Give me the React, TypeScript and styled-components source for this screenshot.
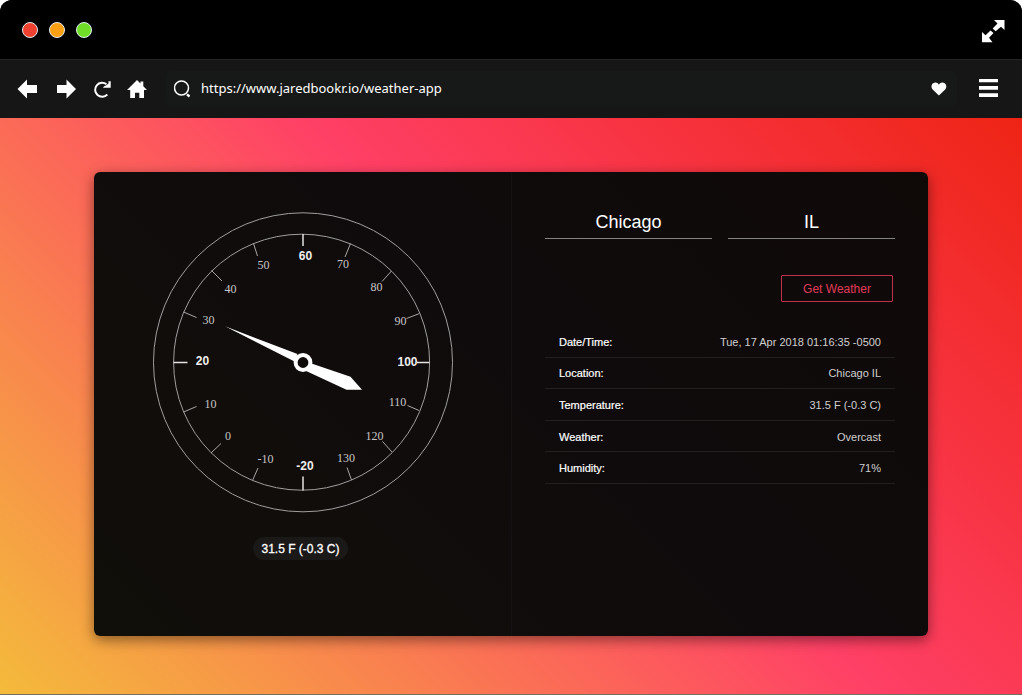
import React from 'react';
import styled, { createGlobalStyle } from 'styled-components';

const GlobalStyle = createGlobalStyle`
  *, *::before, *::after { box-sizing: border-box; }
  body {
    margin: 0;
    background: #fff;
    font-family: "Liberation Sans", Arial, sans-serif;
  }
  button, input { font: inherit; }
`;

const BrowserWindow = styled.div`
  display: flex;
  flex-direction: column;
  min-height: 100vh;
  overflow: hidden;
  border-radius: 12px 12px 0 0;
  background: #000;
`;

const TitleBar = styled.header`
  display: flex;
  align-items: center;
  justify-content: space-between;
  height: 59px;
  padding: 2px 17px 0 22px;
  background: #000;
`;

const Lights = styled.div`
  display: flex;
  gap: 11px;
  padding-bottom: 2px;
`;

const Light = styled.button<{ $color: string }>`
  width: 16px;
  height: 16px;
  padding: 0;
  border: 1px solid #e4efef;
  border-radius: 50%;
  background: ${(p) => p.$color};
`;

const IconButton = styled.button`
  display: flex;
  padding: 0;
  border: 0;
  background: none;
  color: #fff;
  cursor: pointer;
`;

const Toolbar = styled.nav`
  display: flex;
  align-items: center;
  height: 59px;
  padding: 0 23px 0 16px;
  border-top: 1px solid #242424;
  background: #161616;
`;

const NavButtons = styled.div`
  display: flex;
  gap: 12px;
  margin-right: 18px;
`;

const AddressBar = styled.div`
  display: flex;
  flex: 1;
  align-items: center;
  height: 36px;
  margin-right: 22px;
  padding: 0 10px 0 8px;
  border-radius: 6px;
  background: #171918;
`;

const AddressInput = styled.input`
  flex: 1;
  min-width: 0;
  height: 24px;
  margin: 0 8px 0 11px;
  padding: 0 0 2px;
  border: 0;
  outline: 0;
  background: none;
  color: #fff;
  font-family: "Noto Sans", "Open Sans", sans-serif;
  font-size: 13px;
`;

const Page = styled.main`
  display: flex;
  flex: 1;
  padding: 54px 94px 58px;
  border-bottom: 1px solid #75705c;
  background: linear-gradient(45deg, #f4bb3b 0%, #ff4066 55%, #ee2415 100%);
`;

const Card = styled.section`
  display: grid;
  flex: 1;
  grid-template-columns: 1fr 1fr;
  border-radius: 6px;
  background: linear-gradient(45deg, #110f0a, #0f0b0c 55%, #0f0a08);
  box-shadow: 0 4px 14px rgba(0, 0, 0, 0.45);
`;

const GaugePanel = styled.div`
  display: flex;
  flex-direction: column;
  align-items: center;
  padding: 40px 21px 40px 20px;
`;

const Reading = styled.output`
  margin-top: 24px;
  margin-right: 3px;
  padding: 1px 8px 0;
  border-radius: 12px;
  background: #1b1918;
  color: #fff;
  font-size: 12px;
  line-height: 22px;
  -webkit-text-stroke: 0.3px #fff;
`;

const DetailPanel = styled.div`
  padding: 35px 33px 40px;
  border-left: 1px solid #161213;
`;

const SearchForm = styled.form`
  display: grid;
  grid-template-columns: 1fr 1fr;
  column-gap: 16px;
  row-gap: 36px;
`;

const PlaceInput = styled.input`
  width: 100%;
  height: 32px;
  padding: 0;
  border: 0;
  border-bottom: 1px solid #858283;
  border-radius: 0;
  outline: 0;
  background: none;
  color: #fff;
  font-size: 18px;
  text-align: center;
`;

const SubmitButton = styled.button`
  grid-column: 2;
  justify-self: end;
  width: 112px;
  height: 27px;
  margin-right: 2px;
  padding: 0;
  border: 1px solid #c0304c;
  border-radius: 1px;
  background: none;
  color: #e03a58;
  font-size: 12px;
  cursor: pointer;
`;

const Table = styled.table`
  width: 100%;
  height: 158px;
  margin-top: 24px;
  border-collapse: separate;
  border-spacing: 0;
  font-size: 11px;
  line-height: 16px;
`;

const NameCell = styled.th`
  padding: 1px 14px 0;
  border-bottom: 1px solid #221f1f;
  color: #fff;
  font-weight: 400;
  text-align: left;
  -webkit-text-stroke: 0.2px #fff;
`;

const ValueCell = styled.td`
  padding: 1px 14px 0;
  border-bottom: 1px solid #221f1f;
  color: #d0cecf;
  text-align: right;
`;

const MinorLabel = styled.text`
  fill: #c8c6c6;
  font-family: "Liberation Serif", "Times New Roman", serif;
  font-size: 12px;
  text-anchor: middle;
`;

const MajorLabel = styled.text`
  fill: #f0eeee;
  font-family: "Liberation Sans", Arial, sans-serif;
  font-size: 12px;
  font-weight: 700;
  text-anchor: middle;
`;

type Mark = { label: string; x: number; y: number; tick: string; major?: boolean };

const marks: Mark[] = [
  { label: '60', x: 153.5, y: 44, tick: 'M151 22V34', major: true },
  { label: '70', x: 191, y: 52, tick: 'M198.500 31.5L193 45' },
  { label: '80', x: 224.5, y: 75, tick: 'M239.5 59L230 69.5' },
  { label: '90', x: 248.5, y: 109, tick: 'M267.5 101.5L254.5 106.5' },
  { label: '100', x: 255.5, y: 150, tick: 'M277.5 150.5H265', major: true },
  { label: '110', x: 245.5, y: 190, tick: 'M267 198.5L255.5 193.5' },
  { label: '120', x: 222.5, y: 224, tick: 'M240 240L230.5 229.5' },
  { label: '130', x: 194, y: 246, tick: 'M199.5 268L195 255.5' },
  { label: '-20', x: 153, y: 254, tick: 'M151 278.5V264.5', major: true },
  { label: '-10', x: 113.5, y: 247, tick: 'M100.5 268.5L106 256' },
  { label: '0', x: 76, y: 224, tick: 'M59 241L69 231.5' },
  { label: '10', x: 58.5, y: 192, tick: 'M31.5 200L44.5 194.5' },
  { label: '20', x: 50.5, y: 149, tick: 'M21.5 150.5H35.5', major: true },
  { label: '30', x: 56.5, y: 108, tick: 'M31.5 100L44.5 105.5' },
  { label: '40', x: 78.5, y: 77, tick: 'M59.5 58.5L70 69' },
  { label: '50', x: 111.5, y: 53, tick: 'M101.5 31.5L105.5 44' },
];

const weather = [
  ['Date/Time:', 'Tue, 17 Apr 2018 01:16:35 -0500'],
  ['Location:', 'Chicago IL'],
  ['Temperature:', '31.5 F (-0.3 C)'],
  ['Weather:', 'Overcast'],
  ['Humidity:', '71%'],
];

function Gauge() {
  return (
    <svg width="301" height="301" viewBox="0 0 301 301" role="img" aria-label="Thermometer dial">
      <g fill="none" stroke="#a09e9e">
        <circle cx="151" cy="150.3" r="149.5" />
        <circle cx="149.6" cy="150.2" r="128" />
      </g>
      {marks.map((m) => {
        const Label = m.major ? MajorLabel : MinorLabel;
        return (
          <g key={m.label}>
            <path
              d={m.tick}
              stroke={m.major ? '#e4e2e2' : '#a8a6a6'}
              strokeWidth={m.major ? 1.5 : 1}
            />
            <Label x={m.x} y={m.y + 4}>{m.label}</Label>
          </g>
        );
      })}
      <path
        fill="#fff"
        d="M73 114.3L145.5 142L142.500 149.5ZM158 151L198.5 164.7L210 177.7H194.5L153 158.5Z"
      />
      <circle cx="151" cy="150.5" r="7.4" fill="#0f0b0a" stroke="#fff" strokeWidth="4" />
    </svg>
  );
}

function NavIcon({ children }: { children: React.ReactNode }) {
  return (
    <svg width="24" height="24" viewBox="0 0 24 24" fill="currentColor" aria-hidden="true">
      {children}
    </svg>
  );
}

export default function App() {
  return (
    <>
      <GlobalStyle />
      <BrowserWindow>
        <TitleBar>
          <Lights>
            <Light type="button" $color="#f04030" aria-label="Close" />
            <Light type="button" $color="#ffa012" aria-label="Minimize" />
            <Light type="button" $color="#70dd28" aria-label="Maximize" />
          </Lights>
          <IconButton type="button" aria-label="Full screen">
            <svg width="24" height="24" viewBox="0 0 24 24" fill="currentColor" aria-hidden="true">
              <path d="M13 1H23.500V11L20 7.700L14.700 12.300L11.700 9.500L16.500 4.500Z" />
              <path d="M9.500 11.500L12.500 14L8 18.700L11.500 23.300H1V13L4.500 16.300Z" />
            </svg>
          </IconButton>
        </TitleBar>

        <Toolbar aria-label="Browser">
          <NavButtons>
            <IconButton type="button" aria-label="Back">
              <NavIcon><path d="M1.500 12L11 2.500V8H21V16H11V21.500Z" /></NavIcon>
            </IconButton>
            <IconButton type="button" aria-label="Forward">
              <NavIcon><path d="M24 12L14.500 2.500V8H5V16H14.500V21.500Z" /></NavIcon>
            </IconButton>
            <IconButton type="button" aria-label="Reload">
              <NavIcon>
                <path
                  d="M19.300 17.500A7 7 0 1 1 18.500 7.300"
                  fill="none"
                  stroke="currentColor"
                  strokeWidth="2"
                />
                <path d="M22.700 4.300V10.800H14.800L16.500 9L18 8.500L20.500 6.500V4.300Z" />
              </NavIcon>
            </IconButton>
            <IconButton type="button" aria-label="Home">
              <NavIcon>
                <path d="M13 3L16.500 6.500V4.500H19.300V9.200L23 13H20V21H15.300V15.800H11V21H6.200V13H3Z" />
              </NavIcon>
            </IconButton>
          </NavButtons>
          <AddressBar>
            <svg width="16" height="18" viewBox="0 0 16 18" fill="none" stroke="#fff" aria-hidden="true">
              <circle cx="7.500" cy="8" r="7" strokeWidth="1.500" />
              <path d="M13 14.300L15.500 16.500" strokeWidth="2.400" />
            </svg>
            <AddressInput
              type="text"
              aria-label="Address"
              defaultValue="https://www.jaredbookr.io/weather-app"
            />
            <IconButton type="button" aria-label="Favorite">
              <svg width="16" height="14" viewBox="0 0 16 14" fill="currentColor" aria-hidden="true">
                <path d="M7.900 13.500L1.600 7.500C-0.200 5.500 0.300 2.300 2.200 1.200C4.300 0 6.800 0.500 7.900 2.700C9 0.500 11.600 0 13.600 1.200C15.500 2.300 16 5.500 14.200 7.500Z" />
              </svg>
            </IconButton>
          </AddressBar>
          <IconButton type="button" aria-label="Menu">
            <svg width="20" height="20" viewBox="0 1 20 20" fill="currentColor" aria-hidden="true">
              <path d="M0 0.700H19V4.300H0ZM0 8H19V11.700H0ZM0 15.300H19V19H0Z" />
            </svg>
          </IconButton>
        </Toolbar>

        <Page>
          <Card>
            <GaugePanel>
              <Gauge />
              <Reading>31.5 F (-0.3 C)</Reading>
            </GaugePanel>
            <DetailPanel>
              <SearchForm onSubmit={(e) => e.preventDefault()}>
                <PlaceInput type="text" aria-label="City" defaultValue="Chicago" />
                <PlaceInput type="text" aria-label="State" defaultValue="IL" />
                <SubmitButton type="submit">Get Weather</SubmitButton>
              </SearchForm>
              <Table>
                <tbody>
                  {weather.map(([name, value]) => (
                    <tr key={name}>
                      <NameCell scope="row">{name}</NameCell>
                      <ValueCell>{value}</ValueCell>
                    </tr>
                  ))}
                </tbody>
              </Table>
            </DetailPanel>
          </Card>
        </Page>
      </BrowserWindow>
    </>
  );
}
